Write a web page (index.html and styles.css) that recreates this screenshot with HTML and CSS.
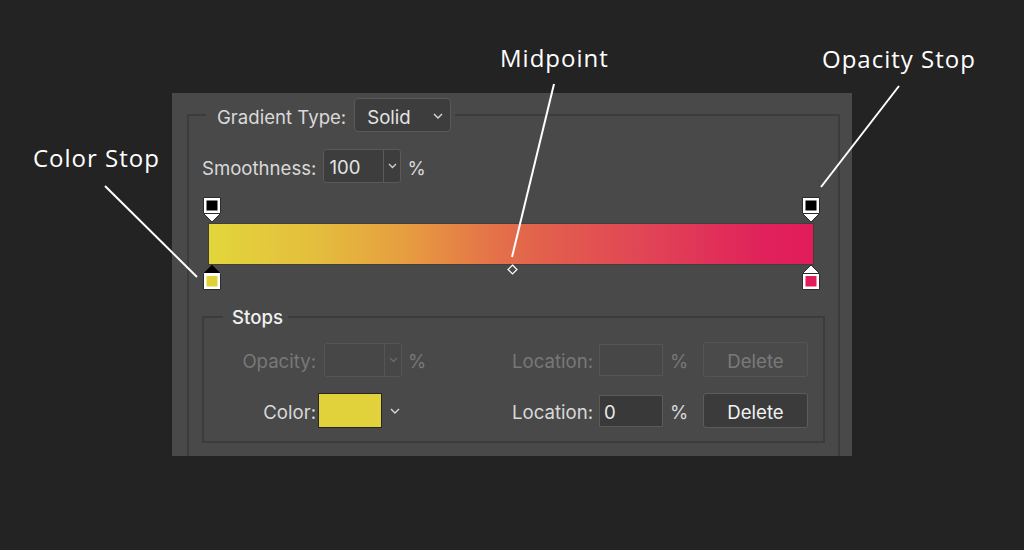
FILE: index.html
```html
<!DOCTYPE html>
<html>
<head>
<meta charset="utf-8">
<link rel="stylesheet" href="styles.css">
</head>
<body>
<div class="stage">
  <div class="panel">
    <fieldset class="group outer">
      <legend class="legend-main">
        <span class="lbl">Gradient Type:</span>
        <span class="select"><span class="sel-text">Solid</span>
          <svg class="chev" width="10" height="6" viewBox="0 0 10 6"><path d="M1 1 L5 5 L9 1" fill="none" stroke="#d8d8d8" stroke-width="1.4"/></svg>
        </span>
      </legend>
      <div class="smooth-row">
        <span class="lbl">Smoothness:</span>
        <span class="combo"><span class="combo-val">100</span><span class="combo-btn"><svg width="9" height="6" viewBox="0 0 9 6"><path d="M1 1 L4.5 4.5 L8 1" fill="none" stroke="#d0d0d0" stroke-width="1.3"/></svg></span></span>
        <span class="lbl pct">%</span>
      </div>
      <div class="ramp">
        <div class="bar"></div>
        <svg class="stop stop-tl" width="18" height="26" viewBox="0 0 18 26">
          <path d="M0.5 0.5 H17.5 V16.5 L9 25 L0.5 16.5 Z" fill="#fff" stroke="#2b2b2b"/>
          <rect x="3.5" y="3.5" width="11" height="10" fill="#000"/>
          <path d="M1 16.5 H17" stroke="#2b2b2b"/>
        </svg>
        <svg class="stop stop-tr" width="18" height="26" viewBox="0 0 18 26">
          <path d="M0.5 0.5 H17.5 V16.5 L9 25 L0.5 16.5 Z" fill="#fff" stroke="#2b2b2b"/>
          <rect x="3.5" y="3.5" width="11" height="10" fill="#000"/>
          <path d="M1 16.5 H17" stroke="#2b2b2b"/>
        </svg>
        <svg class="stop stop-bl" width="18" height="26" viewBox="0 0 18 26">
          <path d="M9 1 L17.5 9.5 V25.5 H0.5 V9.5 Z" fill="#fff" stroke="#2b2b2b"/>
          <path d="M9 1 L17 9 H1 Z" fill="#000"/>
          <rect x="3.5" y="12" width="11" height="10.5" fill="#e0d03a"/>
        </svg>
        <svg class="stop stop-br" width="18" height="26" viewBox="0 0 18 26">
          <path d="M9 1 L17.5 9.5 V25.5 H0.5 V9.5 Z" fill="#fff" stroke="#2b2b2b"/>
          <path d="M1 9.5 H17" stroke="#2b2b2b"/>
          <rect x="3.5" y="12" width="11" height="10.5" fill="#e01c5a"/>
        </svg>
        <svg class="mid" width="11" height="11" viewBox="0 0 11 11"><path d="M5.5 1 L10 5.5 L5.5 10 L1 5.5 Z" fill="none" stroke="#fff" stroke-width="1.2"/></svg>
      </div>
      <fieldset class="group stops">
        <legend class="legend-stops">Stops</legend>
        <div class="srow">
          <span class="lbl dis rlabel">Opacity:</span>
          <span class="cell2">
            <span class="combo dcombo"><span class="combo-val"></span><span class="combo-btn"><svg width="9" height="6" viewBox="0 0 9 6"><path d="M1 1 L4.5 4.5 L8 1" fill="none" stroke="#6a6a6a" stroke-width="1.3"/></svg></span></span>
            <span class="lbl dis pct">%</span>
          </span>
          <span class="lbl dis loclabel">Location:</span>
          <span class="cell4"><span class="input dinput"></span><span class="lbl dis pct2">%</span></span>
          <span class="btn dbtn">Delete</span>
        </div>
        <div class="srow row2">
          <span class="lbl rlabel">Color:</span>
          <span class="cell2">
            <span class="swatch"></span>
            <svg class="swchev" width="10" height="6" viewBox="0 0 10 6"><path d="M1 1 L5 5 L9 1" fill="none" stroke="#d8d8d8" stroke-width="1.4"/></svg>
          </span>
          <span class="lbl loclabel">Location:</span>
          <span class="cell4"><span class="input">0</span><span class="lbl pct2">%</span></span>
          <span class="btn">Delete</span>
        </div>
      </fieldset>
    </fieldset>
  </div>

  <svg class="leaders" width="1024" height="550" viewBox="0 0 1024 550">
    <line x1="105" y1="186" x2="197" y2="277" stroke="#fff" stroke-width="2"/>
    <line x1="554" y1="84" x2="512" y2="257" stroke="#fff" stroke-width="2"/>
    <line x1="899" y1="86" x2="821" y2="187" stroke="#fff" stroke-width="2"/>
  </svg>
  <div class="note note-color">Color Stop</div>
  <div class="note note-mid">Midpoint</div>
  <div class="note note-opacity">Opacity Stop</div>
</div>
</body>
</html>
```

FILE: styles.css
```css
html, body {
  margin: 0;
  padding: 0;
  background: #232323;
}
.stage {
  position: relative;
  width: 1024px;
  height: 550px;
  padding: 93px 0 0 172px;
  box-sizing: border-box;
  font-family: Inter, "Liberation Sans", sans-serif;
  font-size: 18.6px;
  color: #d9d9d9;
}
.panel {
  width: 680px;
  height: 363px;
  background: #494949;
  overflow: hidden;
  padding-top: 5px;
  box-sizing: border-box;
}
.group {
  margin: 0;
  padding: 0;
  border: 2px solid #3c3c3c;
  min-inline-size: 0;
}
.outer {
  margin-left: 15px;
  width: 653px;
  box-sizing: border-box;
  height: 420px;
}
.legend-main {
  margin-left: 17px;
  padding: 0 4px 0 11px;
  display: flex;
  align-items: center;
  height: 34px;
}
.lbl {
  white-space: nowrap;
  line-height: 22px;
  padding-top: 3px;
}
.select {
  margin-left: 8px;
  width: 97px;
  height: 34px;
  box-sizing: border-box;
  border: 1px solid #5a5a5a;
  border-radius: 4px;
  background: #3d3d3d;
  display: flex;
  align-items: center;
  padding-left: 12px;
  color: #e4e4e4;
  position: relative;
}
.sel-text {
  padding-top: 3px;
}
.chev {
  position: absolute;
  right: 7px;
  top: 14px;
}
.smooth-row {
  display: flex;
  align-items: center;
  margin-top: 17px;
  margin-left: 13px;
  height: 34px;
}
.combo {
  margin-left: 7px;
  width: 78px;
  height: 34px;
  box-sizing: border-box;
  border: 1px solid #5a5a5a;
  border-radius: 3px;
  background: #3d3d3d;
  display: flex;
}
.combo-val {
  width: 54px;
  border-right: 1px solid #5a5a5a;
  padding-left: 5px;
  padding-top: 2px;
  line-height: 30px;
  color: #e4e4e4;
}
.combo-btn {
  flex: 1;
  display: flex;
  align-items: center;
  justify-content: center;
}
.pct {
  margin-left: 6px;
}
.ramp {
  position: relative;
  margin-top: 14px;
  margin-left: 14px;
  width: 617px;
  height: 93px;
  padding: 27px 0 0 6px;
  box-sizing: border-box;
}
.bar {
  width: 604px;
  height: 40px;
  background: linear-gradient(to right, #e2d63b 0%, #e4bd3d 18%, #e79c40 33%, #e47548 46%, #e2604c 55%, #e14556 72%, #e0215b 92%, #e11c5b 100%);
  box-shadow: 0 0 0 1px rgba(60, 40, 20, 0.35);
}
.stop {
  position: absolute;
}
.stop-tl { left: 0; top: 0; }
.stop-tr { left: 599px; top: 0; }
.stop-bl { left: 0; top: 67px; }
.stop-br { left: 599px; top: 67px; }
.mid {
  position: absolute;
  left: 304px;
  top: 67px;
}
.stops {
  margin: 16px 12px 0 13px;
  padding: 0 0 13px 0;
  width: 623px;
  box-sizing: border-box;
}
.legend-stops {
  margin-left: 19px;
  padding: 0 5px 0 9px;
  line-height: 22px;
  color: #f0f0f0;
  font-weight: 500;
}
.srow {
  display: grid;
  grid-template-columns: 112px 196px 87px 104px 105px;
  align-items: center;
  height: 35px;
  margin-top: 14px;
}
.row2 {
  margin-top: 16px;
}
.rlabel {
  text-align: right;
}
.cell2 {
  display: flex;
  align-items: center;
}
.cell2 .combo {
  margin-left: 8px;
}
.loclabel {
  text-align: right;
  padding-right: 8px;
}
.cell4 {
  display: flex;
  align-items: center;
}
.input {
  width: 64px;
  height: 32px;
  box-sizing: border-box;
  border: 1px solid #5a5a5a;
  background: #393939;
  line-height: 28px;
  padding: 2px 0 0 4px;
  color: #e8e8e8;
}
.pct2 {
  margin-left: 7px;
}
.btn {
  width: 105px;
  height: 35px;
  box-sizing: border-box;
  border: 1px solid #5c5c5c;
  border-radius: 3px;
  background: #3b3b3b;
  display: flex;
  align-items: center;
  justify-content: center;
  padding-top: 3px;
  color: #f2f2f2;
}
.dis {
  color: #787878;
}
.dcombo {
  background: #474747;
  border-color: #555;
}
.dcombo .combo-val {
  border-right-color: #555;
}
.dinput {
  background: #474747;
  border-color: #555;
}
.dbtn {
  background: #4a4a4a;
  border-color: #555;
  color: #7a7a7a;
}
.swatch {
  margin-left: 2px;
  width: 64px;
  height: 35px;
  box-sizing: border-box;
  background: #e1d23c;
  border: 1px solid #262626;
}
.swchev {
  margin-left: 8px;
}
.leaders {
  position: absolute;
  left: 0;
  top: 0;
}
.note {
  position: absolute;
  font-family: "Open Sans", sans-serif;
  font-weight: 500;
  font-size: 24px;
  line-height: 24px;
  letter-spacing: 1px;
  color: #ffffff;
  white-space: nowrap;
}
.note-color { left: 33px; top: 146px; }
.note-mid { left: 500px; top: 46px; }
.note-opacity { left: 822px; top: 47px; }
```
